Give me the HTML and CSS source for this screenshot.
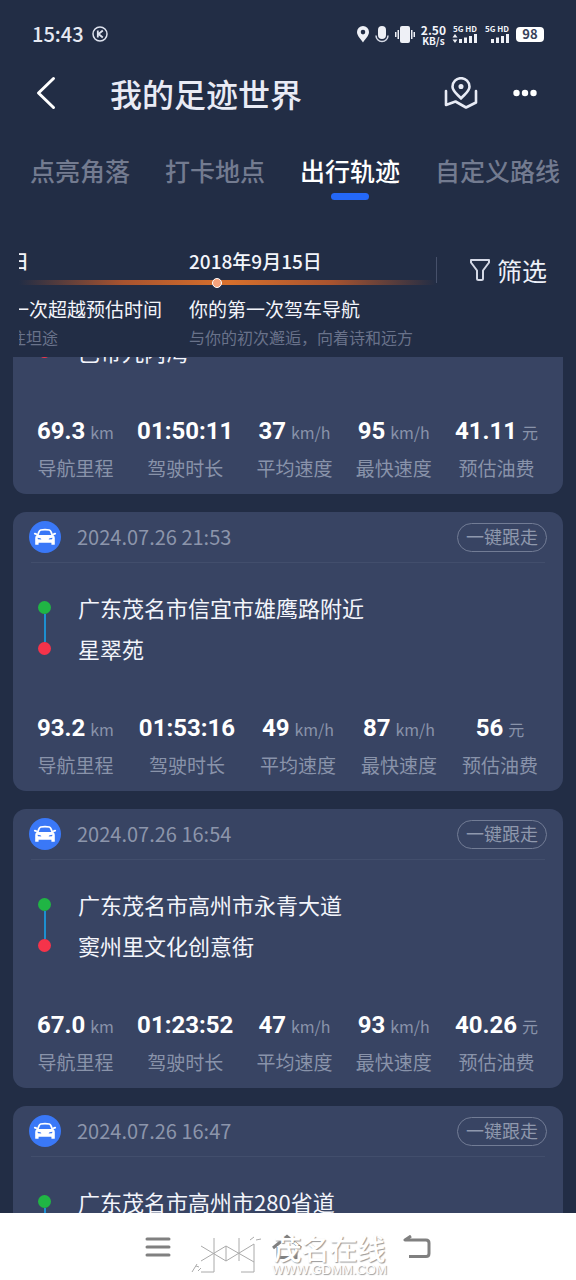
FILE: index.html
```html
<!DOCTYPE html>
<html lang="zh-CN">
<head>
<meta charset="utf-8">
<meta name="viewport" content="width=device-width, initial-scale=1">
<title>我的足迹世界</title>
<link rel="stylesheet" href="styles.css">
</head>
<body>
<svg class="defs" aria-hidden="true">
  <symbol id="car" viewBox="0 0 32 32">
    <circle cx="16" cy="16" r="16" fill="#3a78f7"/>
    <path fill="#fff" fill-rule="evenodd" d="M11.500 8.200Q16 7.200 20.500 8.200Q22 8.600 22.800 10.500L24.300 14Q25.800 15 25.800 17V23.200Q25.800 23.800 25.200 23.800H23Q22.400 23.800 22.400 23.200V21.800H9.600V23.200Q9.600 23.800 9 23.800H6.800Q6.200 23.800 6.200 23.200V17Q6.200 15 7.700 14L9.200 10.500Q10 8.600 11.500 8.200ZM12 9.800Q11.200 10 10.900 10.900L9.700 14H22.300L21.100 10.900Q20.800 10 20 9.800Q16 9 12 9.800ZM8.500 16.800L9 18.200L12.300 18.400Q12.200 17 8.500 16.800ZM23.500 16.800L23 18.200L19.700 18.400Q19.800 17 23.500 16.800Z"/>
    <path stroke="#fff" stroke-width="1.800" stroke-linecap="round" d="M5.800 12.600L7.200 13.200M26.200 12.600L24.800 13.200"/>
  </symbol>
</svg>
<div class="app">
  <div class="status">
    <div class="status-left">
      <span>15:43</span>
      <svg width="16" height="16" viewBox="0 0 16 16" fill="none" stroke="#dfe3ef" stroke-width="1.500"><circle cx="8" cy="8" r="7"/><path stroke-width="1.800" d="M5.800 4.500V11.500M10.800 4.500L6.500 8L10.800 11.500"/></svg>
    </div>
    <div class="status-right">
      <svg width="12" height="17" viewBox="0 0 12 17"><path fill="#eef0f6" fill-rule="evenodd" d="M6 0A6 6 0 0 1 12 6C12 10 8 13 6 16.500C4 13 0 10 0 6A6 6 0 0 1 6 0ZM6 3.800A2.300 2.300 0 1 0 6 8.400A2.300 2.300 0 0 0 6 3.800Z"/></svg>
      <svg width="14" height="17" viewBox="0 0 14 17"><rect x="3" y="0" width="8" height="13" rx="4" fill="#eef0f6"/><path d="M1 9.500A6 6 0 0 0 13 9.500" fill="none" stroke="#d5d9e5" stroke-width="1.500"/></svg>
      <svg width="20" height="17" viewBox="0 0 20 17" fill="#eef0f6"><rect x="5" y="0" width="10" height="17" rx="2"/><rect x="2.500" y="4" width="1.500" height="9"/><rect x="0" y="6" width="1.500" height="5"/><rect x="16" y="4" width="1.500" height="9"/><rect x="18.500" y="6" width="1.500" height="5"/></svg>
      <div class="rate"><span class="rate-num">2.50</span><span>KB/s</span></div>
      <div class="signal"><span>5G HD</span>
        <svg width="26" height="10" viewBox="0 0 26 10" fill="#eef0f6"><path d="M3 0L5.500 3.500H0.500ZM3 9L5.500 5.500H0.500Z"/><rect x="7" y="5" width="3" height="4"/><rect x="12" y="3.500" width="3" height="5.500"/><rect x="17" y="2" width="3" height="7"/><rect x="22" y="0" width="3" height="9"/></svg></div>
      <div class="signal"><span>5G HD</span>
        <svg width="26" height="10" viewBox="0 0 26 10" fill="#eef0f6"><rect x="7" y="5" width="3" height="4"/><rect x="12" y="3.500" width="3" height="5.500"/><rect x="17" y="2" width="3" height="7"/><rect x="22" y="0" width="3" height="9"/></svg></div>
      <div class="battery">98</div>
    </div>
  </div>

  <header class="header">
    <button class="icon-btn" aria-label="返回"><svg width="20" height="34" viewBox="0 0 20 34" fill="none" stroke="#fff" stroke-width="3" stroke-linecap="round" stroke-linejoin="round"><path d="M17.500 2.500L2.500 17L17.500 31.500"/></svg></button>
    <h1 class="title">我的足迹世界</h1>
    <button class="icon-btn" aria-label="地图"><svg width="34" height="32" viewBox="0 0 34 32" fill="none" stroke="#e8ebf5" stroke-width="2.600" stroke-linecap="round" stroke-linejoin="round"><path d="M17 21.500C13 17 8.500 14 8.500 9.700A8.500 8.500 0 0 1 25.500 9.700C25.500 14 21 17 17 21.500Z"/><circle cx="17" cy="9.500" r="1.800" fill="#e8ebf5" stroke-width="1.500"/><path d="M2 14V28L11.500 24.500L22 30.500L32 25.500V14"/></svg></button>
    <button class="icon-btn" aria-label="更多"><svg width="24" height="8" viewBox="0 0 24 8" fill="#fff"><circle cx="3.500" cy="4" r="3.200"/><circle cx="12" cy="4" r="3.200"/><circle cx="20.500" cy="4" r="3.200"/></svg></button>
  </header>

  <nav class="tabs">
    <button class="tab">点亮角落</button>
    <button class="tab">打卡地点</button>
    <button class="tab tab-active">出行轨迹</button>
    <button class="tab">自定义路线</button>
  </nav>

  <section class="milestones">
    <div class="track">
      <article class="mile mile-past">
        <div class="mile-date">日</div>
        <div class="mile-title">一次超越预估时间</div>
        <div class="mile-note">往坦途</div>
      </article>
      <article class="mile">
        <div class="mile-date">2018年9月15日</div>
        <div class="mile-title">你的第一次驾车导航</div>
        <div class="mile-note">与你的初次邂逅，向着诗和远方</div>
      </article>
      <div class="beam"><span class="beam-dot"></span></div>
    </div>
    <button class="filter"><svg width="22" height="24" viewBox="0 0 22 24" fill="none" stroke="#d5d9e6" stroke-width="2" stroke-linejoin="round"><path d="M2 2H20V4.500L14 12.500V20.500Q14 22 12.500 22H9.500Q8 22 8 20.500V12.500L2 4.500Z"/></svg>筛选</button>
  </section>

  <main class="list">
    <article class="card card-cut">
      <div class="stops">
        <p class="stop stop-end">巴帝九内湾</p>
      </div>
      <dl class="stats">
        <div class="stat"><dt>导航里程</dt><dd>69.3 <small>km</small></dd></div>
        <div class="stat"><dt>驾驶时长</dt><dd>01:50:11</dd></div>
        <div class="stat"><dt>平均速度</dt><dd>37 <small>km/h</small></dd></div>
        <div class="stat"><dt>最快速度</dt><dd>95 <small>km/h</small></dd></div>
        <div class="stat"><dt>预估油费</dt><dd>41.11 <small>元</small></dd></div>
      </dl>
    </article>
    <article class="card">
      <div class="card-head"><svg class="car" aria-hidden="true"><use href="#car"/></svg><time>2024.07.26 21:53</time><button class="follow">一键跟走</button></div>
      <div class="stops">
        <p class="stop stop-start">广东茂名市信宜市雄鹰路附近</p>
        <p class="stop stop-end">星翠苑</p>
      </div>
      <dl class="stats">
        <div class="stat"><dt>导航里程</dt><dd>93.2 <small>km</small></dd></div>
        <div class="stat"><dt>驾驶时长</dt><dd>01:53:16</dd></div>
        <div class="stat"><dt>平均速度</dt><dd>49 <small>km/h</small></dd></div>
        <div class="stat"><dt>最快速度</dt><dd>87 <small>km/h</small></dd></div>
        <div class="stat"><dt>预估油费</dt><dd>56 <small>元</small></dd></div>
      </dl>
    </article>
    <article class="card">
      <div class="card-head"><svg class="car" aria-hidden="true"><use href="#car"/></svg><time>2024.07.26 16:54</time><button class="follow">一键跟走</button></div>
      <div class="stops">
        <p class="stop stop-start">广东茂名市高州市永青大道</p>
        <p class="stop stop-end">窦州里文化创意街</p>
      </div>
      <dl class="stats">
        <div class="stat"><dt>导航里程</dt><dd>67.0 <small>km</small></dd></div>
        <div class="stat"><dt>驾驶时长</dt><dd>01:23:52</dd></div>
        <div class="stat"><dt>平均速度</dt><dd>47 <small>km/h</small></dd></div>
        <div class="stat"><dt>最快速度</dt><dd>93 <small>km/h</small></dd></div>
        <div class="stat"><dt>预估油费</dt><dd>40.26 <small>元</small></dd></div>
      </dl>
    </article>
    <article class="card">
      <div class="card-head"><svg class="car" aria-hidden="true"><use href="#car"/></svg><time>2024.07.26 16:47</time><button class="follow">一键跟走</button></div>
      <div class="stops">
        <p class="stop stop-start">广东茂名市高州市280省道</p>
      </div>
    </article>
  </main>

  <footer class="navbar">
    <button class="icon-btn" aria-label="菜单"><svg width="26" height="22" viewBox="0 0 26 22" stroke="#808080" stroke-width="3" stroke-linecap="round"><path d="M2 3H24M2 11H24M2 19H24"/></svg></button>
    <button class="icon-btn" aria-label="主页"><svg width="30" height="26" viewBox="0 0 30 26" fill="none" stroke="#808080" stroke-width="3"><path d="M1 14L15 2.500L29 14M6 13V23.500H24V13"/></svg></button>
    <button class="icon-btn" aria-label="后退"><svg width="28" height="24" viewBox="0 0 28 24" fill="none" stroke="#808080" stroke-width="3" stroke-linejoin="round"><path d="M8 1L2 5H23Q26 5 26 8V18.500Q26 21.500 23 21.500H6"/></svg></button>
    <div class="mark">
      <svg width="78" height="42" viewBox="0 0 78 42" fill="none" stroke="#aaa"><path d="M11 11L36 26M11 26L36 11V26L64 9M24 3V37H11M36 11L64 27M49 3V26M64 9V37H51M2 37L7 29M8 36L11 33M6 31L9 32M60 5L64 2M66 5L71 4"/></svg>
      <div class="mark-text"><strong>茂名在线</strong><span>WWW.GDMM.COM</span></div>
    </div>
  </footer>
</div>
</body>
</html>
```
FILE: styles.css
```css
* { box-sizing: border-box; }
body {
  margin: 0;
  background: #222d45;
  color: #f3f5fb;
  font-family: "Noto Sans CJK SC", sans-serif;
}
button {
  margin: 0;
  padding: 0;
  border: 0;
  background: none;
  color: inherit;
  font: inherit;
}
svg { display: block; flex: none; }
.defs { position: absolute; width: 0; height: 0; }
.app { display: flex; flex-direction: column; height: 100vh; overflow: hidden; }

.status {
  display: flex;
  justify-content: space-between;
  align-items: center;
  height: 56px;
  padding: 12px 32px 0;
}
.status-left { display: flex; align-items: center; gap: 8px; font-size: 20px; font-weight: 500; line-height: 28px; color: #e6e9f2; }
.status-right { display: flex; align-items: center; gap: 6px; }
.rate, .signal { display: flex; flex-direction: column; align-items: center; font-weight: 700; white-space: nowrap; }
.rate { font-size: 10px; line-height: 9px; }
.rate-num { font-size: 12px; line-height: 12px; }
.signal { gap: 1px; font-size: 8px; line-height: 8px; }
.battery {
  width: 28px;
  height: 15px;
  border-radius: 4px;
  background: #fff;
  color: #39435a;
  font-size: 13px;
  font-weight: 700;
  line-height: 14px;
  text-align: center;
}

.header { display: flex; align-items: center; height: 74px; padding: 0 39px 0 36px; }
.icon-btn { display: flex; align-items: center; justify-content: center; }
.title { flex: 1; margin: 0 0 0 54px; font-size: 32px; font-weight: 500; line-height: 44px; color: #e9ebf5; }
.header .icon-btn + .icon-btn { margin-left: 35px; }

.tabs { display: flex; justify-content: space-between; height: 110px; padding: 20px 16px 0 30px; }
.tab { position: relative; height: 40px; font-size: 25px; font-weight: 500; line-height: 40px; color: #737b90; white-space: nowrap; }
.tab-active { color: #fff; }
.tab-active::after {
  content: "";
  position: absolute;
  left: calc(50% - 19px);
  bottom: -10px;
  width: 38px;
  height: 7px;
  border-radius: 4px;
  background: #2468f8;
}

.milestones { display: flex; align-items: flex-start; height: 117px; padding: 0 29px 0 19px; }
.track { position: relative; display: flex; flex: 1; height: 117px; overflow: hidden; }
.mile { flex: none; width: 240px; white-space: nowrap; }
.mile-past { width: 179px; margin-left: -9px; }
.mile-date { height: 54px; padding-top: 7px; font-size: 19px; font-weight: 500; line-height: 28px; }
.mile-title { font-size: 19px; line-height: 30px; }
.mile-note { font-size: 16px; line-height: 26px; color: #69728a; }
.beam {
  position: absolute;
  inset: 40px 0 auto;
  height: 5px;
  background: linear-gradient(90deg, transparent, #a8532f 25%, #d8702c 50%, #a8532f 75%, transparent);
}
.beam-dot {
  position: absolute;
  left: 193px;
  top: -2px;
  width: 10px;
  height: 10px;
  border: 1px solid #fff;
  border-radius: 50%;
  background: #f5a27c;
}
.filter {
  display: flex;
  align-items: center;
  gap: 6px;
  height: 26px;
  margin-top: 17px;
  padding-left: 32px;
  border-left: 1px solid #46506a;
  font-size: 25px;
  line-height: 26px;
  color: #edf0f8;
}

.list { flex: 1; min-height: 0; display: flex; flex-direction: column; gap: 18px; padding: 0 13px; overflow: hidden; }
.card { flex: none; padding: 0 18px 12px; border-radius: 13px; background: #384463; }
.card-cut { margin-top: -26px; }
.card-head { display: flex; align-items: center; height: 51px; margin-bottom: 24px; border-bottom: 1px solid #424e6c; }
.car { width: 32px; height: 32px; margin-left: -2px; }
.card-head time { flex: 1; margin-left: 16px; font-size: 20px; line-height: 28px; color: #8c95ab; }
.follow {
  height: 29px;
  margin-right: -2px;
  padding: 0 8px 3px;
  border: 1px solid #727c95;
  border-radius: 15px;
  font-size: 18px;
  line-height: 24px;
  color: #8f98ad;
}
.stops { margin-bottom: 43px; }
.stop { position: relative; margin: 0; padding-left: 47px; font-size: 22px; line-height: 41px; }
.stop::before {
  content: "";
  position: absolute;
  left: 7px;
  top: 14px;
  width: 13px;
  height: 13px;
  border-radius: 50%;
  background: #20b544;
}
.stop-end::before { background: #f5334a; }
.stop-start::after {
  content: "";
  position: absolute;
  left: 13px;
  top: 27px;
  width: 2px;
  height: 28px;
  background: #1d8fd0;
}
.stats { display: flex; justify-content: space-between; margin: 0; padding: 0 7px 0 6px; }
.stat { display: flex; flex-direction: column-reverse; align-items: center; gap: 7px; }
.stat dt { font-size: 19px; line-height: 28px; color: #8993aa; }
.stat dd { margin: 0; font-family: Roboto, "Noto Sans CJK SC", sans-serif; font-size: 24px; font-weight: 700; line-height: 32px; color: #fff; white-space: nowrap; }
.stat small { margin-left: -1px; font-family: "Noto Sans CJK SC", sans-serif; font-size: 16px; font-weight: 400; line-height: 16px; color: #8993aa; }

.navbar { position: relative; display: flex; align-items: center; justify-content: center; gap: 101px; height: 67px; background: #fff; }
.mark { position: absolute; left: calc(50% - 98px); bottom: 3px; display: flex; align-items: flex-end; gap: 4px; color: #fff; }
.mark-text { display: flex; flex-direction: column; align-items: center; text-shadow: 1px 1px 1px #999; }
.mark-text strong { font-size: 28px; font-weight: 500; line-height: 30px; }
.mark-text span { font-family: "Liberation Sans", sans-serif; font-size: 13px; line-height: 14px; }
```
